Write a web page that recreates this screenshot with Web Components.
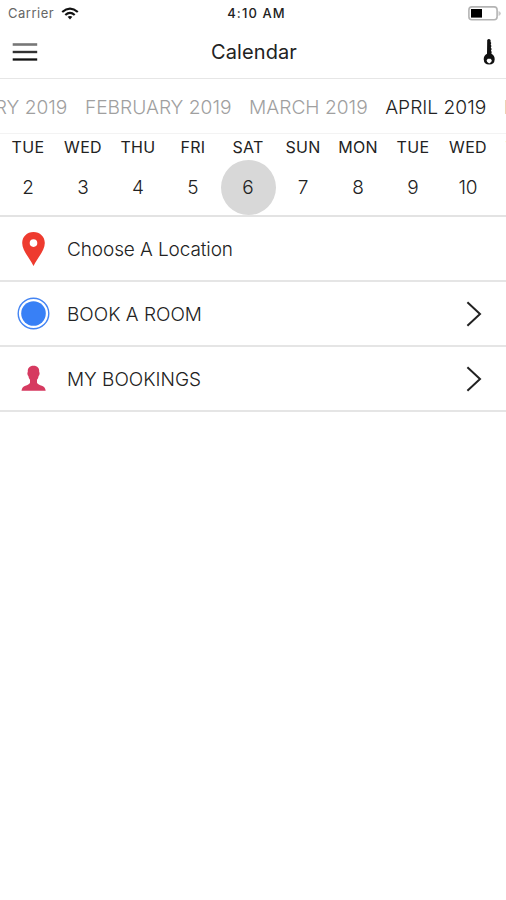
<!DOCTYPE html>
<html lang="en">
<head>
<meta charset="utf-8">
<title>Calendar</title>
<style>
html,body{margin:0;height:100%;background:#fff;overflow:hidden}
body{font-family:Inter,"Liberation Sans",sans-serif;color:#222}
</style>
</head>
<body>
<calendar-app></calendar-app>
<script>
const define = (name, html) => {
  const template = document.createElement('template');
  template.innerHTML = html;
  customElements.define(name, class extends HTMLElement {
    constructor() {
      super();
      this.attachShadow({mode: 'open'}).append(template.content.cloneNode(true));
    }
  });
};

define('status-bar', `
<style>
:host{display:grid;grid-template-columns:1fr auto 1fr;align-items:center;height:26px;padding:0 5px 0 8px;box-sizing:border-box;font-size:13px;line-height:26px}
.left{display:flex;align-items:center;gap:7px;color:#666;letter-spacing:.5px}
.left span{margin-top:-1px}
.time{color:#222;font-weight:500;font-size:13px;letter-spacing:1.1px;margin-left:4px}
svg{display:block}
.battery{justify-self:end}
</style>
<div class="left"><span>Carrier</span>
<svg width="18" height="13" viewBox="0 0 18 13"><g fill="none" stroke="#111" stroke-width="2.2"><path d="M1.2 5Q9-1.8 16.8 5"/><path d="M4.3 8Q9 3.8 13.7 8"/></g><path d="M6.6 9.8Q9 8 11.4 9.8L9 12.4Z" fill="#111"/></svg></div>
<span class="time">4:10 AM</span>
<svg class="battery" width="33" height="15" viewBox="0 0 33 15"><rect x=".9" y=".9" width="28.2" height="12.8" rx="3" fill="#fff" stroke="#b4b4b4" stroke-width="1.6"/><rect x="3" y="3" width="11" height="8.6" fill="#000"/><path d="M30.5 5v5q2.3-.8 2.3-2.5T30.5 5" fill="#c8c8c8"/></svg>`);

define('nav-bar', `
<style>
:host{display:grid;grid-template-columns:1fr auto 1fr;align-items:center;height:53px;padding:0 10px 0 12px;box-sizing:border-box;border-bottom:1px solid #e6e6e6}
h1{margin:0;font-size:20px;font-weight:400;line-height:26px;letter-spacing:.1px}
svg{display:block}
.key{justify-self:end}
</style>
<svg width="26" height="20" viewBox="0 0 26 20"><path d="M.7 2.5h24.5" stroke="#777" stroke-width="2.6"/><path d="M.7 10h24.5" stroke="#333" stroke-width="2.4"/><path d="M.7 17.5h24.5" stroke="#111" stroke-width="2.3"/></svg>
<h1><slot></slot></h1>
<svg class="key" width="14" height="28" viewBox="0 0 14 28"><path fill="#111" fill-rule="evenodd" d="M5.200 2Q6.800.2 8.600 2V4L9.300 5 8.700 6.500 9.500 8 8.800 9.500 9.700 11 9 12.500 9.700 14 9.400 15.700Q12.700 17.300 12.700 21.200 12.500 26.400 7.200 26.600 1.900 26.400 1.700 21.200 1.700 17.300 5 15.700ZM4.600 22.300q.1 2.700 2.600 3.100 2.600-.4 2.600-3.100l-1.200-1.500H5.800Z"/></svg>`);

define('month-item', `
<style>
:host{flex:none;font-size:19.2px;line-height:26px;font-weight:300;color:#a0a0a0;white-space:nowrap}
:host([selected]){color:#222}
</style><slot></slot>`);

define('month-strip', `
<style>
:host{display:flex;justify-content:flex-end;height:55px;padding-top:2px;box-sizing:border-box;align-items:center;border-bottom:1px solid #f3f3f3;overflow:hidden}
.run{display:flex;gap:17.500px;flex:none;margin-right:-87.500px}
</style><div class="run"><slot></slot></div>`);

define('day-cell', `
<style>
:host{flex:none;width:55px;display:flex;flex-direction:column;align-items:center}
.name{height:25.5px;font-size:16px;line-height:26px;color:#222;letter-spacing:.3px}
.num{width:55px;height:55px;border-radius:50%;display:grid;place-items:center;font-size:19px;font-weight:300;color:#222;padding-top:1px;box-sizing:border-box}
:host([selected]) .num{background:#d8d8d8}
</style><span class="name"><slot name="name"></slot></span><span class="num"><slot></slot></span>`);

define('day-strip', `
<style>
:host{display:flex;height:83px;padding-left:.5px;box-sizing:border-box;overflow:hidden;border-bottom:2px solid #e3e3e3}
</style><slot></slot>`);

define('menu-row', `
<style>
:host{display:flex;align-items:center;height:65px;box-sizing:border-box;border-bottom:2px solid #e5e5e5;padding:0 24px 0 17px;font-size:19px;font-weight:300}
.icon{width:34px;height:34px;margin-right:16px}
.text{flex:1;padding-top:2px;line-height:26px;letter-spacing:var(--track,0);white-space:nowrap}
.chevron{display:none}
:host([link]) .chevron{display:block}
</style>
<span class="icon"><slot name="icon"></slot></span><span class="text"><slot></slot></span>
<svg class="chevron" width="16" height="26" viewBox="0 0 16 26"><path d="M1.400 1.300 14 13 1.400 24.700" fill="none" stroke="#222" stroke-width="2"/></svg>`);

define('calendar-app', `
<style>
:host{display:block;height:900px;background:#fff;overflow:hidden}
svg{display:block}
</style>
<status-bar></status-bar>
<nav-bar>Calendar</nav-bar>
<month-strip><month-item>JANUARY 2019</month-item><month-item>FEBRUARY 2019</month-item><month-item>MARCH 2019</month-item><month-item selected>APRIL 2019</month-item><month-item>MAY 2019</month-item></month-strip>
<day-strip>${[['TUE',2],['WED',3],['THU',4],['FRI',5],['SAT',6],['SUN',7],['MON',8],['TUE',9],['WED',10],['THU',11]].map(([d, n]) => `<day-cell${n === 6 ? ' selected' : ''}><span slot="name">${d}</span>${n}</day-cell>`).join('')}</day-strip>
<menu-row style="--track:-.1px"><svg slot="icon" width="34" height="34" viewBox="0 0 34 34"><path fill="#ee3b2f" fill-rule="evenodd" d="M16.500 0C23 0 27.800 4.700 27.800 11c0 7.500-7 14.500-11.300 23C12.200 25.500 5.200 18.500 5.200 11 5.200 4.700 10 0 16.500 0Zm0 7.300a3.800 3.800 0 1 0 0 7.600 3.800 3.800 0 0 0 0-7.600Z"/></svg>Choose A Location</menu-row>
<menu-row link><svg slot="icon" width="34" height="34" viewBox="0 0 34 34"><circle cx="16.500" cy="16.500" r="15.300" fill="#fff" stroke="#4384f3" stroke-width="1.400"/><circle cx="16.500" cy="16.500" r="12.300" fill="#3880f6"/></svg>BOOK A ROOM</menu-row>
<menu-row link><svg slot="icon" width="34" height="34" viewBox="0 0 34 34"><path fill="#d63a60" d="M16.500 3.800c4 0 6 2.300 5.700 6.200.8.500.4 3.300-.6 4-.3 1.700-.7 2.900-1.600 3.700v3.100c.6 1.800 2.700 2.200 4.800 2.900 2.400.8 3.500 2.200 3.900 5H4.500c.4-2.800 1.500-4.200 3.900-5 2.100-.7 4-1.100 4.600-2.900v-3.100c-.8-.8-1.300-2-1.600-3.700-1-.7-1.400-3.500-.6-4-.3-3.900 1.700-6.200 5.700-6.200Z"/></svg>MY BOOKINGS</menu-row>`);
</script>
</body>
</html>
